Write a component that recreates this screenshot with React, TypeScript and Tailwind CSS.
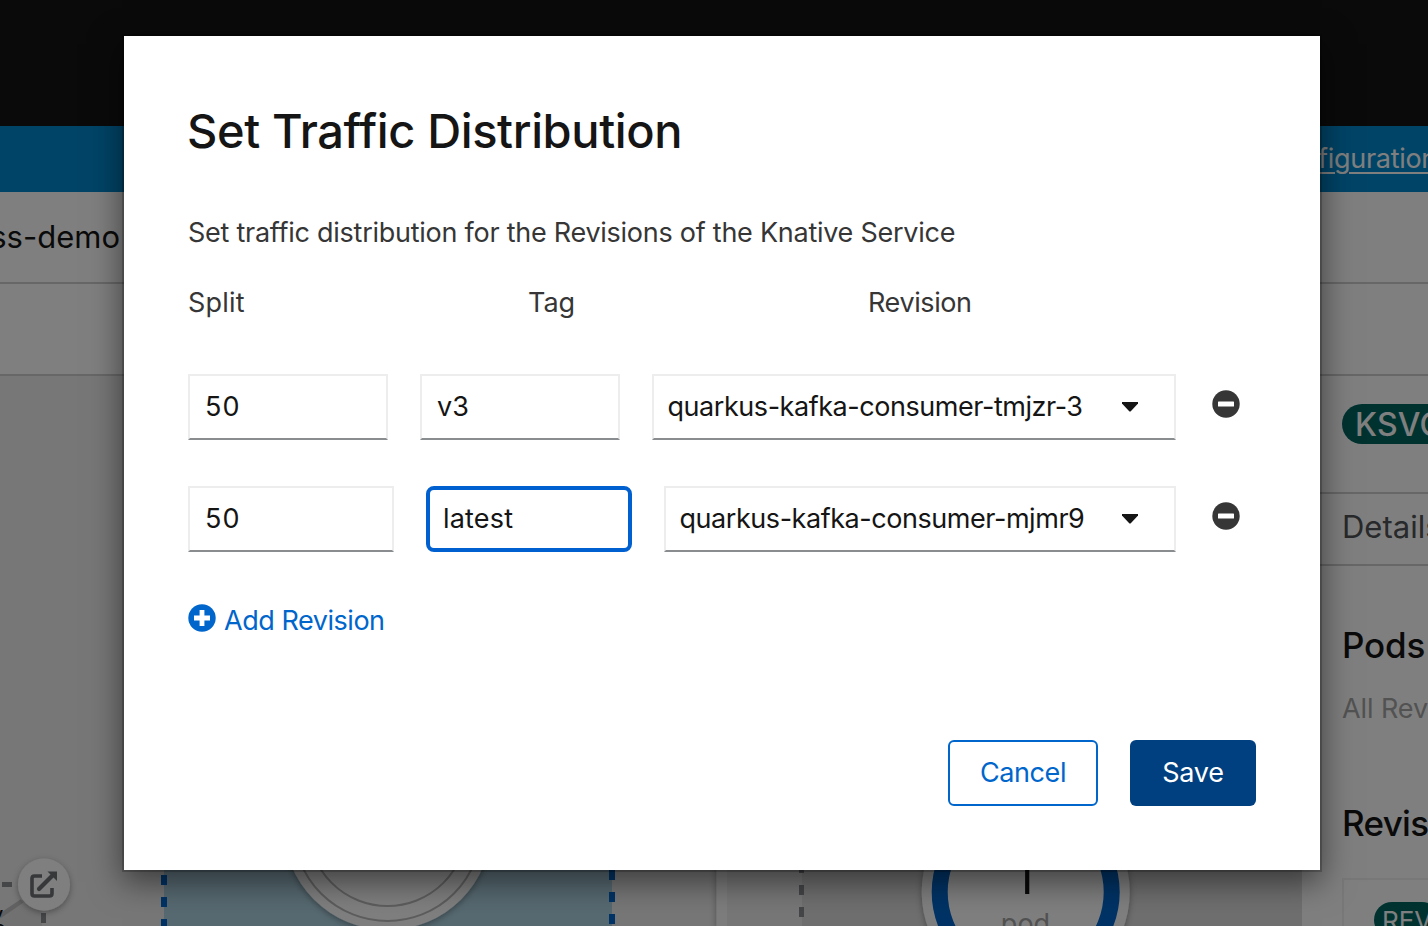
import React from "react";

type RowProps = {
  split: string;
  tag: string;
  revision: string;
  focused?: boolean;
  columns: string;
};

const field =
  "h-[66px] border-2 border-[#ededed] border-b-[#8a8d90] bg-white flex items-center text-[#151515] text-[27px] whitespace-nowrap";

function TrafficRow({ split, tag, revision, focused, columns }: RowProps) {
  return (
    <div className="flex">
      <div className={`grid w-[988px] gap-8 ${columns}`}>
        <div className={`${field} px-[15px]`}>
          <span className="tracking-[1px]">{split}</span>
        </div>
        {focused ? (
          <div className="flex h-[66px] items-center whitespace-nowrap rounded-lg border-4 border-[#0060cf] bg-white px-[13px] text-[27px] text-[#151515]">
            <span className="tracking-[0.2px]">{tag}</span>
          </div>
        ) : (
          <div className={`${field} px-[15px]`}>
            <span>{tag}</span>
          </div>
        )}
        <div className={`${field} justify-between pl-[13.5px] pr-9`}>
          <span className="tracking-[-0.45px]">{revision}</span>
          <svg width="16" height="10" viewBox="0 0 16 10" className="shrink-0">
            <path d="M0 0h16v1.5L9 9q-1 1-2 0L0 1.5z" fill="#151515" />
          </svg>
        </div>
      </div>
      <svg width="28" height="28" viewBox="0 0 28 28" className="ml-9 mt-4">
        <circle cx="14" cy="14" r="13.7" fill="#363636" />
        <rect x="6" y="11.5" width="16" height="5" rx="0.6" fill="#fff" />
      </svg>
    </div>
  );
}

function Topology() {
  return (
    <svg width="1302" height="550" viewBox="0 376 1302 550" className="block font-['Inter',sans-serif]">
      <defs>
        <filter id="soft" x="-20%" y="-20%" width="140%" height="140%">
          <feDropShadow dx="0" dy="2" stdDeviation="3" floodColor="#000" floodOpacity="0.35" />
        </filter>
      </defs>
      <rect x="0" y="376" width="1302" height="550" fill="#eeeeee" />
      <rect x="164" y="376" width="448" height="550" fill="#aed3e2" />
      <path d="M164 853V926" stroke="#0066cc" strokeWidth="6" strokeDasharray="10 12" />
      <path d="M612 870V926" stroke="#0066cc" strokeWidth="6" strokeDasharray="10 12" />
      <rect x="716.500" y="376" width="586" height="550" fill="#fafafa" filter="url(#soft)" />
      <rect x="727" y="376" width="575" height="550" fill="#efefef" />
      <rect x="802" y="376" width="500" height="550" fill="#dedede" />
      <path d="M801.5 863V926" stroke="#8a8d90" strokeWidth="5" strokeDasharray="10 12" />
      <circle cx="387.500" cy="826" r="104" fill="#fff" filter="url(#soft)" />
      <circle cx="387.500" cy="827" r="94" fill="none" stroke="#bbb" strokeWidth="2" />
      <circle cx="387.500" cy="827" r="79" fill="none" stroke="#bbb" strokeWidth="2" />
      <circle cx="1025.700" cy="892" r="104" fill="#fff" filter="url(#soft)" />
      <circle cx="1025.700" cy="892" r="86" fill="none" stroke="#0066cc" strokeWidth="16" />
      <path d="M1027.200 860V894" stroke="#151515" strokeWidth="4.200" />
      <text x="1025.500" y="933" textAnchor="middle" fontSize="27" fill="#a5a5a5">pod</text>
      <path d="M22 900L0 915V926H42V900z" fill="#e2e2e2" />
      <path d="M22 901L0 916" stroke="#c2c2c2" strokeWidth="4.500" />
      <path d="M2 884.500H12M43.500 913V923" stroke="#8a8d90" strokeWidth="5" />
      <text x="-9" y="922" fontSize="22" fill="#151515">y</text>
      <text x="-7" y="936" fontSize="22" fill="#151515">e</text>
      <circle cx="44" cy="884.500" r="26" fill="#fff" filter="url(#soft)" />
      <path d="M42 876H34.500Q32 876 32 878.500V893.500Q32 896 34.500 896H49.500Q52 896 52 893.500V888" fill="none" stroke="#6c7072" strokeWidth="3.600" />
      <path d="M39 889L53 875" stroke="#6c7072" strokeWidth="4.200" strokeLinecap="round" />
      <path d="M47.500 871.500H57V881z" fill="#6c7072" />
    </svg>
  );
}

function Backdrop() {
  return (
    <div className="flex h-full flex-col bg-white text-[#151515]">
      <div className="h-[126px] shrink-0 bg-[#151515]" />
      <div className="flex h-[66px] shrink-0 items-center justify-end overflow-hidden bg-[#0088ce]">
        <span className="mr-[-9px] whitespace-nowrap text-[27px] tracking-[-0.3px] text-white underline decoration-2 underline-offset-4">
          configuration
        </span>
      </div>
      <div className="flex h-[92px] shrink-0 items-center border-b-2 border-[#cfcfcf]">
        <span className="ml-[-175px] w-[295px] whitespace-nowrap text-right text-[31px]">serverless-demo</span>
      </div>
      <div className="h-[92px] shrink-0 border-b-2 border-[#cfcfcf]" />
      <div className="flex h-[550px]">
        <Topology />
        <div className="w-[126px] overflow-hidden whitespace-nowrap bg-white">
          <div className="flex h-[118px] items-center border-b-2 border-[#cfcfcf] pb-5 pl-10">
            <span className="flex h-10 shrink-0 items-center rounded-full bg-[#006461] px-[13px] pt-[2px] text-[32px] font-medium tracking-[0.2px] text-white">
              KSVC
            </span>
          </div>
          <div className="flex h-[72px] items-center border-b-2 border-[#cfcfcf] pl-10 text-[31px] text-[#4f5255]">
            <span className="pb-[3px]">Details</span>
          </div>
          <div className="pl-10 pt-[57px]">
            <div className="text-[35px] font-medium leading-[44px] tracking-[-0.2px]">Pods</div>
            <div className="mt-[22px] text-[27px] leading-[40px] tracking-[-0.1px] text-[#a5a5a5]">All Revisions</div>
            <div className="mt-[72px] text-[35px] font-medium leading-[44px] tracking-[-0.7px]">Revisions</div>
            <div className="mt-[33px] flex h-[80px] w-[300px] items-start border-2 border-[#f0f0f0] pl-[30px] pt-[22px]">
              <span className="flex h-9 items-center rounded-full bg-[#006461] px-2 text-[26px] text-white">REV</span>
            </div>
          </div>
        </div>
      </div>
    </div>
  );
}

export default function App() {
  return (
    <div className="relative h-[926px] w-[1428px] overflow-hidden font-['Inter',sans-serif]">
      <Backdrop />
      <div className="absolute inset-0 bg-black/50" />
      <div className="absolute left-[124px] top-[36px] flex h-[834px] w-[1196px] flex-col bg-white px-16 pt-[63px] shadow-[0_0_0_2px_rgba(0,0,0,0.2),0_10px_30px_2px_rgba(0,0,0,0.5)]">
        <h1 className="-ml-px h-[65px] whitespace-nowrap text-[47px] font-medium leading-[64px] tracking-[-0.37px] text-[#151515]">
          Set Traffic Distribution
        </h1>
        <p className="mt-[49px] h-10 whitespace-nowrap text-[27px] leading-[40px] tracking-[-0.26px] text-[#363636]">
          Set traffic distribution for the Revisions of the Knative Service
        </p>
        <div className="mt-[30px] grid h-10 grid-cols-[340px_340px_1fr] text-[27px] leading-[40px] text-[#363636]">
          <span className="tracking-[0.2px]">Split</span>
          <span>Tag</span>
          <span className="tracking-[-0.4px]">Revision</span>
        </div>
        <div className="mt-[51px] flex flex-col gap-[46px]">
          <TrafficRow columns="grid-cols-[200px_200px_524px]" split="50" tag="v3" revision="quarkus-kafka-consumer-tmjzr-3" />
          <TrafficRow columns="grid-cols-[206px_206px_512px]" split="50" tag="latest" revision="quarkus-kafka-consumer-mjmr9" focused />
        </div>
        <div className="mt-12 flex h-10 items-center gap-2 text-[27px] text-[#0066cc]">
          <svg width="28" height="28" viewBox="0 0 28 28" className="mb-[4px] shrink-0">
            <circle cx="14" cy="14" r="13.7" fill="#0066cc" />
            <path d="M6 14H22M14 6V22" stroke="#fff" strokeWidth="4.800" />
          </svg>
          <span className="whitespace-nowrap pt-[2px] tracking-[-0.46px]">Add Revision</span>
        </div>
        <div className="mt-[100px] flex justify-end gap-8 text-[27px]">
          <div className="flex h-[66px] w-[150px] items-center justify-center rounded-md border-2 border-[#0066cc] text-[#0066cc]">
            <span className="tracking-[-0.4px]">Cancel</span>
          </div>
          <div className="flex h-[66px] w-[126px] items-center justify-center rounded-md bg-[#004080] text-white">
            <span className="tracking-[-0.2px]">Save</span>
          </div>
        </div>
      </div>
    </div>
  );
}
